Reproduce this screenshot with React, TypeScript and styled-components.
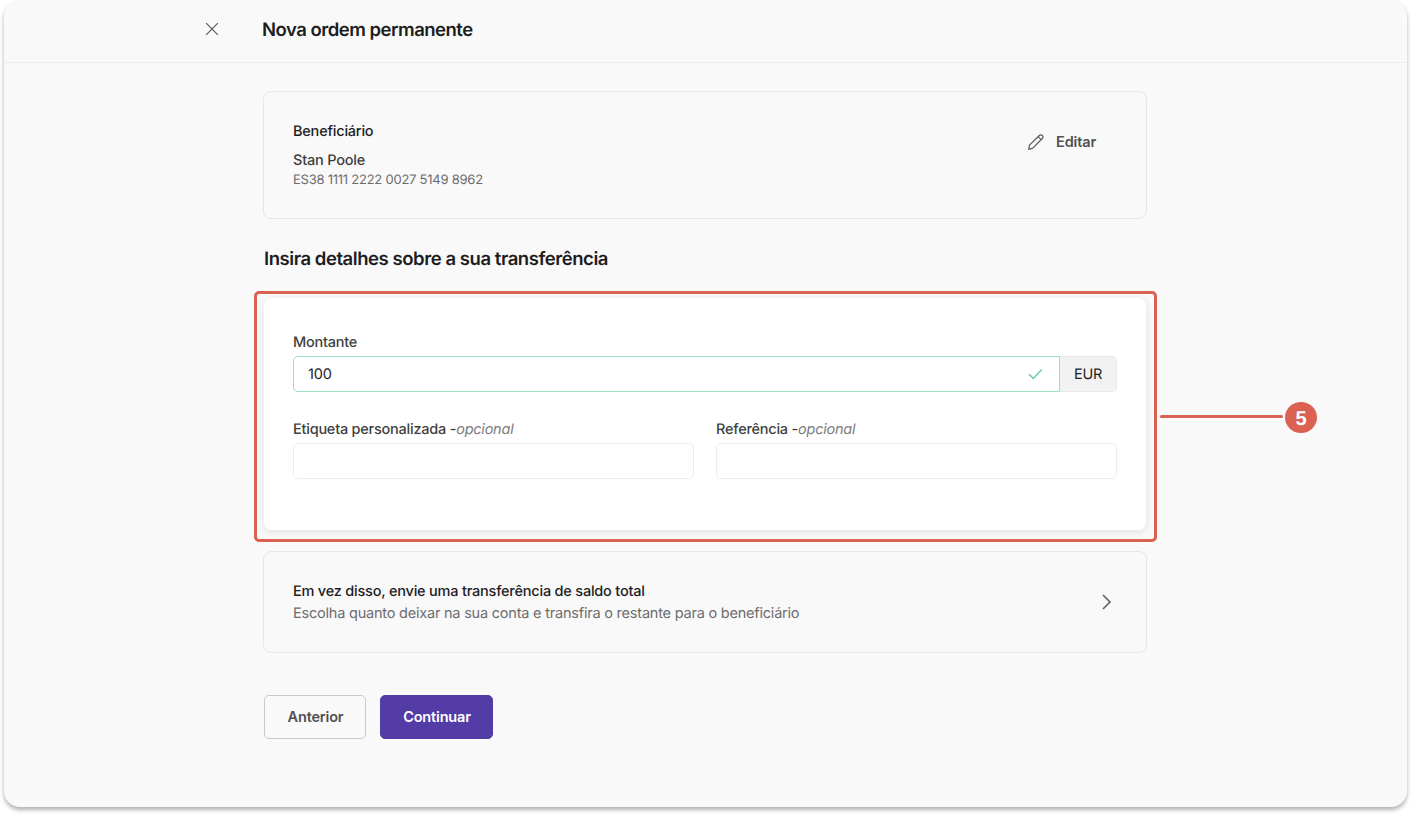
import { FC, ReactElement, ReactNode } from 'react';
import styled, { createGlobalStyle } from 'styled-components';

const GlobalStyle = createGlobalStyle`
  * {
    box-sizing: border-box;
  }

  body {
    margin: 0;
    background: #fff;
    font-family: Inter, 'Liberation Sans', sans-serif;
    letter-spacing: -0.21px;
    text-rendering: geometricPrecision;
  }

  h1, h2, h3, p {
    margin: 0;
  }
`;

const Page = styled.div`
  height: 815px;
  padding: 0 4px;
  overflow: hidden;
`;

const Window = styled.div`
  height: 807px;
  border-radius: 16px;
  background: #f9f9f9;
  box-shadow: 0 3px 4px rgba(0, 0, 0, 0.3);
`;

const Header = styled.header`
  display: flex;
  align-items: center;
  height: 63px;
  padding: 0 0 3px 200px;
  border-bottom: 1px solid #ededed;
`;

const CloseButton = styled.button`
  display: flex;
  padding: 0;
  margin: 0 42px 1px 0;
  border: 0;
  background: none;
`;

const Title = styled.h1`
  color: #1d1d1f;
  font-size: 18.5px;
  line-height: 24px;
  font-weight: 600;
  letter-spacing: -0.5px;
`;

const Content = styled.main`
  width: 884px;
  margin: 28px 0 0 259px;
`;

const OutlinedCard = styled.section<{ height: number; top?: number }>`
  display: flex;
  justify-content: space-between;
  height: ${({ height }) => height}px;
  margin-top: ${({ top = 0 }) => top}px;
  padding: 0 29px;
  border: 1px solid #e6e6e6;
  border-radius: 8px;
`;

const Beneficiary = styled.div`
  display: flex;
  flex-direction: column;
  padding-top: 29px;
`;

const CardTitle = styled.h3`
  color: #1d1d1f;
  font-size: 14.5px;
  line-height: 22px;
  font-weight: 500;
`;

const Name = styled.p`
  margin-top: 8px;
  color: #3f3f41;
  font-size: 14.5px;
  line-height: 20px;
  font-weight: 500;
`;

const Iban = styled.p`
  color: #6c6c6e;
  font-size: 13px;
  line-height: 19px;
  letter-spacing: -0.24px;
`;

const EditButton = styled.button`
  display: flex;
  align-items: center;
  gap: 12px;
  height: 24px;
  margin: 38px 21px 0 0;
  padding: 0;
  border: 0;
  background: none;
  color: #505052;
  font: 600 14.5px/24px Inter, sans-serif;
  letter-spacing: -0.15px;
`;

const SectionTitle = styled.h2`
  margin: 28px 0 0 1px;
  color: #1d1d1f;
  font-size: 18.5px;
  line-height: 24px;
  font-weight: 600;
  letter-spacing: -0.44px;
`;

const FormCard = styled.section`
  position: relative;
  height: 232px;
  margin: 27px 1px 0;
  padding: 33px 29px 0;
  border-radius: 8px;
  background: #fff;
  box-shadow: 0 2px 9px rgba(0, 0, 0, 0.1);
`;

/* Step marker that frames the form */
const Highlight = styled.div`
  position: absolute;
  inset: -7px -11px -12px -10px;
  border: 3px solid #db6152;
  border-radius: 5px;
  pointer-events: none;
`;

const Callout = styled.div`
  position: absolute;
  top: 104px;
  left: 896px;
  display: flex;
  align-items: center;
  gap: 2px;
`;

const CalloutLine = styled.div`
  width: 123px;
  height: 3px;
  margin-top: -2px;
  border-radius: 2px;
  background: #db6152;
`;

const CalloutBadge = styled.div`
  width: 32px;
  height: 31px;
  border-radius: 50%;
  background: #db6152;
  color: #fff;
  font: 700 20px/35px 'Liberation Sans', sans-serif;
  letter-spacing: 0;
  text-align: center;
`;

const Fields = styled.div`
  display: grid;
  grid-template-columns: 1fr 1fr;
  column-gap: 22px;
  margin-top: 26px;
`;

const Label = styled.label`
  display: block;
  height: 22px;
  margin-bottom: 3px;
  color: #3f3f41;
  font-size: 14.5px;
  line-height: 24px;
  font-weight: 500;
  letter-spacing: -0.23px;
  white-space: nowrap;
`;

const Optional = styled.em`
  color: #7c7c7e;
  font-weight: 400;
`;

const TextInput = styled.input`
  display: block;
  width: 100%;
  height: 36px;
  padding: 0 14px;
  border: 1px solid #ededed;
  border-radius: 5px;
  outline: 0;
  background: #fff;
`;

const AmountRow = styled.div`
  display: flex;
  height: 36px;
`;

const AmountBox = styled.div`
  display: flex;
  flex: 1;
  align-items: center;
  justify-content: space-between;
  padding: 0 16px 0 14px;
  border: 1px solid #9de2bd;
  border-radius: 5px 0 0 5px;
  color: #1d1d1f;
  font-size: 14.5px;
`;

const Currency = styled.div`
  width: 57px;
  border: 1px solid #e9e9e9;
  border-left: 0;
  border-radius: 0 5px 5px 0;
  background: #f2f2f2;
  color: #1d1d1f;
  font-size: 14.5px;
  line-height: 35px;
  text-align: center;
`;

const FullBalance = styled.div`
  padding-top: 29px;
`;

const Description = styled.p`
  color: #6c6c6e;
  font-size: 14.5px;
  line-height: 22px;
`;

const ChevronWrapper = styled.div`
  display: flex;
  align-items: center;
  margin-right: 5px;
`;

const Actions = styled.div`
  display: flex;
  gap: 14px;
  margin: 42px 0 0 1px;
`;

const Button = styled.button<{ $primary?: boolean }>`
  width: ${({ $primary }) => ($primary ? 113 : 102)}px;
  height: 44px;
  padding: 0 0 0 1px;
  border: 1px solid ${({ $primary }) => ($primary ? '#533ca6' : '#c9c9c9')};
  border-radius: 5px;
  background: ${({ $primary }) => ($primary ? '#533ca6' : '#f9f9f9')};
  color: ${({ $primary }) => ($primary ? '#fff' : '#505052')};
  font: 600 14.5px/20px Inter, sans-serif;
  letter-spacing: -0.17px;
`;

interface FieldProps {
  label: string;
  optional?: boolean;
  children: ReactNode;
}

const Field: FC<FieldProps> = ({ label, optional, children }): ReactElement => (
  <div>
    <Label>
      {label}
      {optional && (
        <>
          {' -'}
          <Optional>opcional</Optional>
        </>
      )}
    </Label>
    {children}
  </div>
);

const CloseIcon = () => (
  <svg width="16" height="16" viewBox="0 0 16 16" fill="none" stroke="#59595b" strokeWidth="1.2">
    <path d="M2.2 2.2l11.6 11.6M13.8 2.2L2.2 13.8" />
  </svg>
);

const PencilIcon = () => (
  <svg width="16" height="16" viewBox="0 0 16 16" fill="none" stroke="#59595b" strokeWidth="1.2" strokeLinejoin="round">
    <path d="M.7 15.3l.8-4.2L11.3 1.5a2 2 0 0 1 3 0 2 2 0 0 1 0 3L4.8 14.2zM10.1 2.7l3 3" />
  </svg>
);

const CheckIcon = () => (
  <svg width="15" height="12" viewBox="0 0 15 12" fill="none" stroke="#66cf97" strokeWidth="1.5">
    <path d="M1 6.2l4.3 4.2L13.8 1.6" />
  </svg>
);

const ChevronIcon = () => (
  <svg width="10" height="16" viewBox="0 0 10 16" fill="none" stroke="#666668" strokeWidth="1.7">
    <path d="M1 1l7 7-7 7" />
  </svg>
);

const App: FC = (): ReactElement => {
  return (
    <Page>
      <GlobalStyle />
      <Window>
        <Header>
          <CloseButton aria-label="Fechar">
            <CloseIcon />
          </CloseButton>
          <Title>Nova ordem permanente</Title>
        </Header>
        <Content>
          <OutlinedCard height={128}>
            <Beneficiary>
              <CardTitle>Beneficiário</CardTitle>
              <Name>Stan Poole</Name>
              <Iban>ES38 1111 2222 0027 5149 8962</Iban>
            </Beneficiary>
            <EditButton>
              <PencilIcon />
              Editar
            </EditButton>
          </OutlinedCard>
          <SectionTitle>Insira detalhes sobre a sua transferência</SectionTitle>
          <FormCard>
            <Field label="Montante">
              <AmountRow>
                <AmountBox>
                  100
                  <CheckIcon />
                </AmountBox>
                <Currency>EUR</Currency>
              </AmountRow>
            </Field>
            <Fields>
              <Field label="Etiqueta personalizada" optional>
                <TextInput />
              </Field>
              <Field label="Referência" optional>
                <TextInput />
              </Field>
            </Fields>
            <Highlight />
            <Callout>
              <CalloutLine />
              <CalloutBadge>5</CalloutBadge>
            </Callout>
          </FormCard>
          <OutlinedCard height={102} top={21}>
            <FullBalance>
              <CardTitle>Em vez disso, envie uma transferência de saldo total</CardTitle>
              <Description>
                Escolha quanto deixar na sua conta e transfira o restante para o beneficiário
              </Description>
            </FullBalance>
            <ChevronWrapper>
              <ChevronIcon />
            </ChevronWrapper>
          </OutlinedCard>
          <Actions>
            <Button>Anterior</Button>
            <Button $primary>Continuar</Button>
          </Actions>
        </Content>
      </Window>
    </Page>
  );
};

export default App;
